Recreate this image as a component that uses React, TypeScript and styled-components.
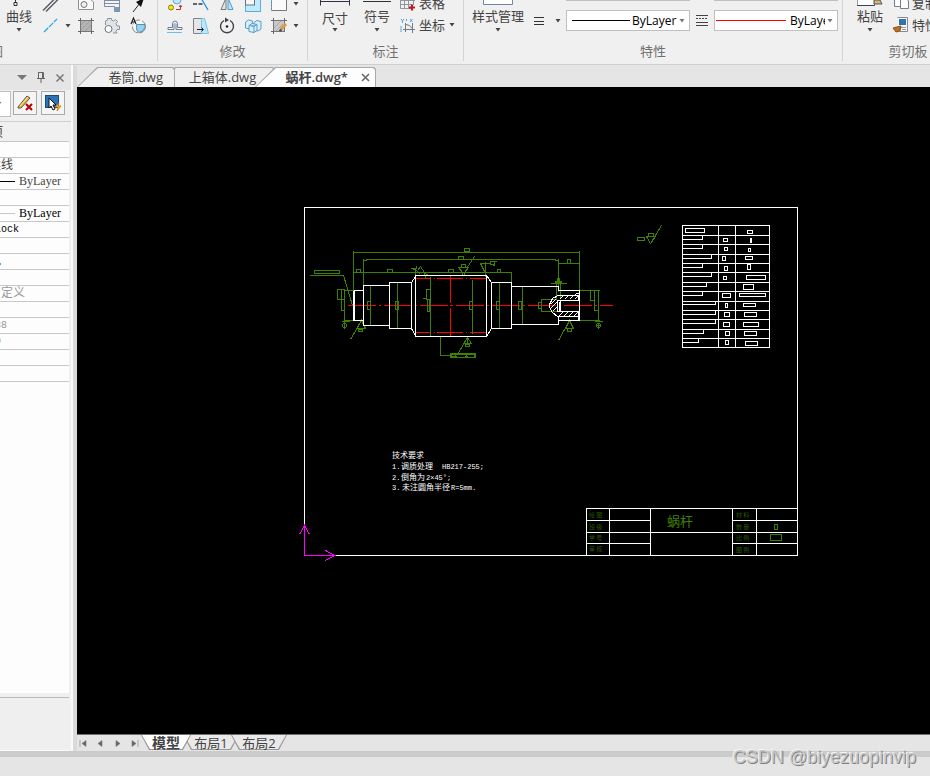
import React from "react";
import styled, { createGlobalStyle, css } from "styled-components";

const Global = createGlobalStyle`
  * { box-sizing: border-box; }
  html, body { margin: 0; padding: 0; }
  body {
    font-family: "Open Sans", "Noto Sans CJK SC", sans-serif;
    font-size: 13px;
    color: #444;
    background: #e5e5e5;
    overflow: hidden;
  }
  button, select, input { font: inherit; color: inherit; }
`;

/* ---------- shell ---------- */

const Shell = styled.div`
  position: relative;
  display: flex;
  flex-direction: column;
  height: 100vh;
  overflow: hidden;
`;

const Ribbon = styled.header`
  display: flex;
  flex: none;
  height: 65px;
  margin-left: -177px;
  background: #f0f0f0;
  border-bottom: 1px solid #cfcfcf;
`;

const Group = styled.section<{ $width: number; $pad?: number; $end?: boolean; $grow?: boolean }>`
  display: flex;
  flex-direction: column;
  flex: ${(p) => (p.$grow ? "1 0" : "0 0")} ${(p) => p.$width}px;
  height: 61px;
  border-right: ${(p) => (p.$grow ? "none" : "1px solid #d4d4d4")};
  > div {
    padding: 0 ${(p) => p.$pad ?? 4}px;
    justify-content: ${(p) => (p.$end ? "flex-end" : "flex-start")};
  }
`;

const Tools = styled.div`
  display: flex;
  align-items: flex-end;
  height: 37px;
  overflow: hidden;
  white-space: nowrap;
`;

const GroupTitle = styled.h2`
  margin: 0;
  padding-top: 4px;
  font-size: 13px;
  font-weight: 400;
  line-height: 20px;
  text-align: center;
  color: #707070;
`;

const ClipTitle = styled(GroupTitle)`
  width: 130px;
`;

const BigButton = styled.button<{ $width: number }>`
  display: flex;
  flex-direction: column;
  align-items: center;
  justify-content: flex-end;
  flex: none;
  width: ${(p) => p.$width}px;
  height: 37px;
  padding: 0 0 3px;
  border: 0;
  background: none;
  line-height: 17px;
  > svg { flex: none; }
`;

const ArrowSlot = styled.span`
  display: flex;
  align-items: flex-end;
  height: 10px;
  padding-bottom: 2px;
`;

const IconGrid = styled.div<{ $cols: number }>`
  display: grid;
  flex: none;
  grid-template-columns: repeat(${(p) => p.$cols}, 26px);
  grid-auto-rows: 22px;
`;

const Stack = styled.div<{ $width?: number }>`
  display: flex;
  flex-direction: column;
  flex: none;
  width: ${(p) => (p.$width ? p.$width + "px" : "auto")};
`;

const IconButton = styled.button`
  display: flex;
  align-items: center;
  justify-content: center;
  height: 22px;
  padding: 0;
  border: 0;
  background: none;
`;

const LabelButton = styled(IconButton)`
  justify-content: flex-start;
  gap: 1px;
  padding-bottom: 2px;
  line-height: 20px;
`;

const Arrow = ({ color = "#444" }: { color?: string }) => (
  <svg width="6" height="4" viewBox="0 0 6 4" aria-hidden="true">
    <path d="M.5 0H5.500L3 3.500Z" fill={color} />
  </svg>
);

const Combo = styled.label`
  display: flex;
  flex: none;
  align-items: center;
  gap: 2px;
  width: 124px;
  height: 21px;
  padding: 0 4px 0 1px;
  border: 1px solid #c0c0c0;
  background: #fff;
  > svg { flex: none; }
  select {
    flex: 1;
    min-width: 0;
    padding: 0;
    border: 0;
    appearance: none;
    background: none;
    color: #000;
    font-size: 12px;
    line-height: 18px;
    text-overflow: clip;
  }
`;

const ComboColumn = styled.div`
  display: flex;
  flex-direction: column;
  gap: 9px;
  height: 46px;
  margin-bottom: 6px;
  justify-content: flex-end;
`;

const SmallIcons = styled.div<{ $width: number }>`
  display: flex;
  flex: none;
  align-items: center;
  justify-content: space-around;
  width: ${(p) => p.$width}px;
  height: 21px;
  margin-bottom: 6px;
`;

/* ---------- ribbon icons ---------- */

const Ic = ({ children }: { children: React.ReactNode }) => (
  <svg width="20" height="20" viewBox="0 0 20 20" fill="none" aria-hidden="true">
    {children}
  </svg>
);

const icons: Record<string, React.ReactNode> = {
  dline: <path d="M3 16.5L16 3.5M6 17.5L18 5.5" stroke="#555b63" strokeWidth="1.4" />,
  line: (
    <>
      <path d="M4 16L17 3" stroke="#16a9e8" strokeWidth="1.2" strokeDasharray="6 1" />
    </>
  ),
  region: (
    <>
      <path d="M2.500 4V15.500H17.500V8L13 4Z" fill="#fafafa" stroke="#8c9199" />
      <circle cx="8" cy="10.500" r="3" fill="#eee" stroke="#777" />
    </>
  ),
  table: (
    <>
      <path d="M2.500 3V12.500H12.500V17.500H17.500V3" fill="#f4f4f4" stroke="#7d8da5" />
      <path d="M3 6.500h14M3 9.500h14" stroke="#7d8da5" />
      <path d="M12 13h5v4h-5Z" fill="#7c99bd" />
    </>
  ),
  arrow: (
    <>
      <path d="M5 18L12 9" stroke="#222" />
      <path d="M8 8L16 4L13 13Z" fill="#111" />
    </>
  ),
  hatch: (
    <>
      <rect x="4.500" y="4.500" width="11" height="11" fill="#b4b4b4" stroke="#777" />
      <path d="M2 4.500h3M4.500 2v3M15 4.500h3M15.500 2v3M2 15.500h3M4.500 15v3M15 15.500h3M15.500 15v3" stroke="#666" />
      <path d="M5 9l4-4M5 14l9-9M9 15l6-6" stroke="#a0a0a0" />
    </>
  ),
  gear: (
    <>
      <path d="M3.500 9V5l2-1V2.500h4V4l2 1 2-1.500 2 2L14 7.500l1 2.500h2.500v3.500H15l-1 2 1 1.500h-4" fill="#e0e3e8" stroke="#8b919b" />
      <circle cx="6.500" cy="13" r="3.500" fill="#fff" stroke="#6b717b" />
    </>
  ),
  clock: (
    <>
      <circle cx="11" cy="10.500" r="6.500" fill="#f4f8fa" stroke="#888" strokeDasharray="9 2" />
      <path d="M8.500 8.500h8.500v3q-2 5-6 5q-3-1-2.500-8Z" fill="#8fd4f2" stroke="#5b8ca8" />
      <path d="M3 8L5.500 2L8 8M4 6h3" stroke="#222" strokeWidth="1.200" />
    </>
  ),
  move: (
    <>
      <circle cx="12" cy="6" r="4" fill="#bfe6fb" stroke="#62a8d8" />
      <circle cx="6" cy="13.500" r="2.500" fill="#ffe600" stroke="#8b7b1b" />
      <path d="M11 15.500h4.500V12M14 13L15.500 11l1.500 2" stroke="#a33" />
    </>
  ),
  trim: (
    <>
      <path d="M2 10h10" stroke="#335" strokeWidth="1.300" strokeDasharray="4 1.500" />
      <path d="M10 4l7 12" stroke="#2b8fdd" strokeWidth="1.300" />
    </>
  ),
  mirror: (
    <>
      <path d="M9 4v11.500H4Z" fill="#e6e6e6" stroke="#777" />
      <path d="M11 4v11.500h5Z" fill="#bfe6fb" stroke="#4b9ad0" />
    </>
  ),
  scale: (
    <>
      <rect x="2.500" y="2.500" width="15" height="15" fill="#bfe9fd" stroke="#5facd8" />
      <rect x="2.500" y="3" width="9" height="8" fill="#f7f7f7" stroke="#68727d" />
    </>
  ),
  stretch: (
    <>
      <path d="M2.500 2V16.500H17.500V2" fill="#fafafa" stroke="#777" />
      <path d="M2.500 3v13" stroke="#54a8db" strokeDasharray="2 1" />
    </>
  ),
  offset: (
    <>
      <path d="M3 13.500V11.500H7.500V8q0-3 2.500-3t2.500 3v3.500H17v2h-6V8.500q-1-2-2 0v5Z" fill="#f6f6f6" stroke="#68809a" />
      <path d="M2 16.500h15" stroke="#71bce6" />
    </>
  ),
  chamfer: (
    <>
      <path d="M2.500 2.500H11V17.500H2.500Z" fill="#e6e6e6" stroke="#7a8288" />
      <path d="M10.500 2.500h3l4 15h-7Z" fill="#b8e8ff" stroke="#7fc4e2" />
      <path d="M6 13.500h6M10.500 11.500l2 2-2 2" stroke="#222" />
    </>
  ),
  rotate: (
    <>
      <path d="M7 4.500A6.500 6.500 0 1 0 13 4.500" stroke="#3d4249" strokeWidth="1.400" />
      <path d="M8 1.500l4 2.500-4 2.500" fill="#3d4249" />
      <circle cx="10" cy="10.500" r="1.300" fill="#222" />
    </>
  ),
  array: (
    <g stroke="#5b9dc3" fill="#d4f0fd">
      <path d="M2.500 6l3-2 4 1v6l-3 2-4-1Z" />
      <path d="M11 6.500l3-2 4 1V13l-3 2-4-1Z" />
      <path d="M6 9.500l3-2 5 1v6l-3 2-5-1ZM6 9.500l5 1 3-2M11 10.500v6" />
    </g>
  ),
  edit: (
    <>
      <rect x="4.500" y="4.500" width="11" height="11" fill="#c8c8c8" stroke="#777" />
      <path d="M2 4.500h3M4.500 2v3M15 4.500h3M15.500 2v3M2 15.500h3M4.500 15v3" stroke="#666" />
      <path d="M5 12l7-7M7 15l7-7" stroke="#aaa" />
      <path d="M12 13l5-5" stroke="#dc9b3a" strokeWidth="3" />
      <path d="M10.500 15l2-1.500" stroke="#444" strokeWidth="2" />
    </>
  ),
  grid: (
    <>
      <path d="M2.500 3v12.500H14M2 7.500h15M2 11.500h12M6.500 3v12M10.500 3v12M15.500 3v9" stroke="#8e959f" />
      <path d="M11 14.500h6M14 11.500v6" stroke="#c5161d" strokeWidth="2" />
    </>
  ),
  coord: (
    <>
      <path d="M7.500 8v9M5 14.500h12M14.500 8v10M8 9.500q4 0 6 4" stroke="#737a83" />
      <path d="M3 4l1.500 2L6 4M4.500 6v2M12 4l2.500 3M14.500 4l-2.500 3M3 11v6M8.500 4v2" stroke="#55a7e5" />
    </>
  ),
  copy: (
    <>
      <path d="M3.500 0v13.500h7V0" fill="#fff" stroke="#777f89" />
      <path d="M9.500 4v11.500h8V8l-4-4Z" fill="#fff" stroke="#777f89" />
    </>
  ),
  match: (
    <>
      <path d="M6.500 2.500h10v14h-8" fill="#f8f8f8" stroke="#858b94" />
      <rect x="8" y="4" width="7" height="6" fill="#3275ad" />
      <path d="M10 12.500h5M11 14.500h4" stroke="#999" />
      <path d="M2 13l4-1 4-1-1 5-4 1Z" fill="#ba7026" stroke="#8b5020" />
    </>
  ),
};

const Tool = ({ name, label }: { name: string; label: string }) => (
  <IconButton aria-label={label}>
    <Ic>{icons[name]}</Ic>
  </IconButton>
);

/* ---------- properties panel ---------- */

const Work = styled.main`
  display: flex;
  flex: 1;
  min-height: 0;
`;

const Side = styled.aside`
  display: flex;
  flex: none;
  flex-direction: column;
  width: 96px;
  margin-left: -23px;
  border-right: 2px solid #fafafa;
  background: #f0f0f0;
`;

const SideHead = styled.div`
  display: flex;
  justify-content: flex-end;
  align-items: center;
  height: 25px;
  gap: 9px;
  padding-right: 6px;
  background: #e5e5e5;
`;

const PlainButton = styled.button`
  display: flex;
  padding: 0;
  border: 0;
  background: none;
`;

const SideTools = styled.div`
  display: flex;
  gap: 4px;
  height: 32px;
  padding-top: 1px;
  border-bottom: 1px solid #d0d0d0;
`;

const Filter = styled.button`
  display: flex;
  align-items: center;
  justify-content: flex-end;
  width: 34px;
  height: 26px;
  margin-right: -2px;
  padding: 0 8px 0 0;
  border: 1px solid #c0c0c0;
  background: #fff;
`;

const Square = styled.button`
  display: flex;
  align-items: center;
  justify-content: center;
  width: 24px;
  height: 24px;
  padding: 0;
  border: 1px solid #a9a9a9;
  background: #f5f5f5;
`;

const Sheet = styled.div`
  flex: 1;
  margin-right: 2px;
  border-bottom: 4px solid #efefef;
  background: #fdfdfd;
`;

const PropTable = styled.table`
  width: 100%;
  table-layout: fixed;
  border-collapse: separate;
  border-spacing: 0;
  font: 12px/15px "Liberation Serif", "Noto Sans CJK SC", serif;
  th, td {
    height: 16px;
    padding: 0;
    border-bottom: 1px solid #c8c8c8;
    text-align: left;
    white-space: nowrap;
    overflow: hidden;
  }
  th {
    height: 20px;
    font-size: 13px;
    font-weight: 400;
    line-height: 19px;
    background: #f0f0f0;
  }
`;

const Value = styled.span<{ $tone?: string }>`
  display: flex;
  align-items: center;
  gap: 4px;
  height: 15px;
  color: ${(p) => p.$tone ?? "#444"};
`;

const Mono = styled(Value)`
  font: 10px/15px "Liberation Mono", monospace;
`;

const Swatch = styled.i<{ $color: string }>`
  width: 38px;
  height: 1px;
  background: ${(p) => p.$color};
`;

const Help = styled.div`
  flex: none;
  height: 54px;
  margin-right: 2px;
  border-top: 1px solid #b9b9b9;
  border-bottom: 1px solid #fafafa;
  background: #efefef;
`;

const rows: React.ReactNode[] = [
  null,
  <Value>连续线</Value>,
  <Value><Swatch $color="#000" />ByLayer</Value>,
  null,
  <Value $tone="#000"><Swatch $color="#c8c8c8" />ByLayer</Value>,
  <Mono $tone="#000">ByBlock</Mono>,
  null,
  <Value $tone="#000">颜色</Value>,
  null,
  <Value $tone="#999">由自定义</Value>,
  null,
  <Mono $tone="#999">57.88</Mono>,
  <Mono $tone="#999">0.00</Mono>,
  null,
  null,
];

const Properties = () => (
  <Side>
    <SideHead>
      <PlainButton aria-label="菜单">
        <svg width="10" height="6"><path d="M0 0H10L5 5Z" fill="#777" /></svg>
      </PlainButton>
      <PlainButton aria-label="固定">
        <svg width="10" height="11" fill="none" stroke="#666"><path d="M2.500 .5h5v6M2.500 0v6M6.500 0v6M1 6.500h8M5 6v5" /></svg>
      </PlainButton>
      <PlainButton aria-label="关闭">
        <svg width="10" height="10" stroke="#777" strokeWidth="1.500"><path d="M1.500 1.500l7 7M8.500 1.500l-7 7" /></svg>
      </PlainButton>
    </SideHead>
    <SideTools>
      <Filter aria-label="对象类型"><Arrow color="#777" /></Filter>
      <Square aria-label="清除选择">
        <svg width="20" height="20" viewBox="0 0 20 20" fill="none">
          <path d="M3 14L12 3l3 2L6 15L3 15Z" fill="#f5b52c" stroke="#555" />
          <path d="M5 13l8-9" stroke="#fff0a5" />
          <path d="M11 11l6 6M17 11l-6 6" stroke="#b80000" strokeWidth="2" />
        </svg>
      </Square>
      <Square aria-label="快速选择">
        <svg width="20" height="20" viewBox="0 0 20 20">
          <rect x="2.500" y="2.500" width="13" height="12" fill="#2b73b8" stroke="#184a7b" />
          <path d="M6 5v10l2-2 2 4 2-1-2-4h3Z" fill="#fff" stroke="#111" />
          <path d="M16 10l-4 4h3l-1 4 4-5h-3Z" fill="#ffc229" stroke="#c76b00" strokeWidth=".7" />
        </svg>
      </Square>
    </SideTools>
    <Sheet>
      <PropTable>
        <thead><tr><th scope="col">选项</th></tr></thead>
        <tbody>
          {rows.map((r, i) => (
            <tr key={i}><td>{r}</td></tr>
          ))}
        </tbody>
      </PropTable>
    </Sheet>
    <Help />
  </Side>
);

/* ---------- document area ---------- */

const Doc = styled.section`
  display: flex;
  flex: 1;
  flex-direction: column;
  min-width: 0;
  border-left: 4px solid #dadada;
`;

const TabStrip = styled.nav`
  display: flex;
  align-items: flex-end;
  flex: none;
  height: 22px;
`;

const FileTab = styled.button<{ $active?: boolean; $width: number; $z: number }>`
  position: relative;
  z-index: ${(p) => p.$z};
  display: flex;
  align-items: center;
  justify-content: flex-end;
  gap: 13px;
  flex: none;
  width: ${(p) => p.$width}px;
  height: 20px;
  padding: 0 ${(p) => (p.$active ? 6 : 12)}px 0 0;
  border: 0;
  background: #a9a9a9;
  clip-path: polygon(20px 0, calc(100% - 2px) 0, 100% 2px, 100% 100%, 0 100%);
  line-height: 20px;
  font-size: 13px;
  font-weight: ${(p) => (p.$active ? 600 : 400)};
  & + & { margin-left: -20px; }
  &::before {
    content: "";
    position: absolute;
    inset: 1px 1px 0 1px;
    z-index: -1;
    background: ${(p) => (p.$active ? "#fdfdfd" : "#f0f0f0")};
    clip-path: polygon(20px 0, calc(100% - 2px) 0, 100% 2px, 100% 100%, 0 100%);
  }
`;

const Canvas = styled.div`
  flex: 1;
  min-height: 0;
  background: #000;
  overflow: hidden;
  svg { display: block; width: 100%; height: 100%; }
`;

const Foot = styled.nav`
  display: flex;
  flex: none;
  height: 17px;
  padding-left: 2px;
  border-top: 1px solid #707070;
`;

const Pager = styled.div`
  display: flex;
  align-items: center;
  gap: 8px;
  width: 62px;
`;

const trapezoid = css`
  clip-path: polygon(0 0, 100% 0, calc(100% - 8px) 100%, 8px 100%);
`;

const SheetTab = styled.button<{ $active?: boolean }>`
  position: relative;
  z-index: ${(p) => (p.$active ? 2 : 1)};
  width: ${(p) => (p.$active ? 50 : 56)}px;
  height: 15px;
  padding: 0;
  border: 0;
  background: #999;
  font-size: ${(p) => (p.$active ? 14 : 13)}px;
  font-weight: ${(p) => (p.$active ? 700 : 400)};
  line-height: 12px;
  ${trapezoid}
  & + & { margin-left: -8px; }
  &::before {
    content: "";
    position: absolute;
    inset: 0 1px 1px;
    z-index: -1;
    background: ${(p) => (p.$active ? "#fff" : "#e9e9e9")};
    ${trapezoid}
  }
`;

const Status = styled.footer`
  flex: none;
  height: 25px;
  border-top: 6px solid #cbcbcb;
  background: #e5e5e5;
`;

const Watermark = styled.div`
  position: absolute;
  right: 14px;
  bottom: 8px;
  z-index: 3;
  font: 18px/22px "Liberation Sans", sans-serif;
  color: #c8c8c8;
  text-shadow: 1px 1px 0 #808080, -1px -1px 0 #f4f4f4;
`;

const Note = styled.text`
  font: 8px "Noto Sans CJK SC", sans-serif;
  fill: #fff;
`;

const Code = styled.text`
  font: 7px "Liberation Mono", monospace;
  fill: #fff;
`;

const Caption = styled.text<{ $big?: boolean }>`
  font: ${(p) => (p.$big ? 13 : 6)}px "Noto Sans CJK SC", sans-serif;
  fill: ${(p) => (p.$big ? "#408000" : "#2c5800")};
`;

const tableLines = [235, 244, 254, 263, 272, 282, 291, 301, 310, 319, 329, 338];
const steps = [702, 702, 711, 702, 711, 706, 702, 715, 715, 715, 703, 698];
const cells: [number, number, number, number][] = [
  [685, 228, 19, 4], [747, 230, 5, 3],
  [723, 238, 4, 3], [750, 238, 1, 4],
  [724, 247, 3, 3], [748, 248, 2, 3],
  [722, 256, 3, 4], [745, 256, 7, 3],
  [724, 266, 3, 4], [747, 264, 3, 5],
  [723, 276, 3, 3], [746, 275, 19, 4],
  [743, 284, 10, 5],
  [722, 293, 8, 4], [739, 293, 26, 3],
  [725, 303, 2, 4], [743, 303, 12, 3],
  [724, 312, 5, 4], [744, 312, 12, 4],
  [723, 322, 6, 4], [743, 322, 15, 4],
  [725, 331, 4, 4], [744, 331, 12, 4],
  [725, 340, 3, 4], [745, 341, 12, 4],
];
const tags: [number, number, number, number][] = [
  [464, 248, 5, 3], [458, 256, 5, 3], [356, 269, 4, 3], [387, 269, 5, 3], [448, 269, 5, 3],
  [497, 269, 3, 3], [567, 259, 3, 4], [314, 270, 25, 3],
  [337, 289, 4, 10], [341, 289, 3, 10], [341, 299, 3, 11], [358, 329, 4, 2],
  [367, 301, 3, 8], [395, 301, 3, 8], [426, 289, 4, 10], [427, 299, 2, 12],
  [469, 301, 3, 8], [496, 301, 3, 8], [518, 301, 3, 8], [538, 302, 3, 6],
  [590, 290, 4, 10], [594, 290, 4, 20], [461, 264, 4, 3], [490, 261, 4, 3],
  [465, 344, 4, 2], [567, 328, 4, 3], [637, 237, 7, 3], [648, 233, 5, 3],
  [774, 524, 3, 5], [770, 534, 11, 6],
];

const Drawing = () => (
  <svg viewBox="77 87 853 647" preserveAspectRatio="xMinYMin meet" role="img" aria-label="蜗杆" shapeRendering="crispEdges" fill="none">
    <g stroke="#fff" transform="translate(.5 .5)">
      <rect x="304" y="207" width="493" height="348" />
      <rect x="682" y="225" width="87" height="122" />
      <path d="M718 225V347M735 225V347" />
      <path d={tableLines.map((y, i) => `M682 ${y}H769M682 ${y + (i === 7 ? 3 : 4)}H${steps[i]}V${y}`).join("")} />
      {cells.map(([x, y, w, h], i) => <rect key={i} x={x} y={y} width={w} height={h} />)}
      <path d="M586 555V508H797M609 508V555M650 508V555M732 508V555M756 508V555M586 520H650M586 532H650M586 543H650M732 520H797M732 532H797M732 543H797M650 532H732" />
    </g>

    <g stroke="#f00" transform="translate(.5 .5)">
      <path d="M347 305H612" strokeDasharray="28 3 2 3" />
      <path d="M415 278H430M433 278H434M436 278H462M465 278H466M469 278H486M415 332H430M433 332H434M436 332H462M465 332H466M469 332H486" />
      <path d="M450 275V302M450 304V305M450 307V336" />
    </g>

    <g stroke="#408000" transform="translate(.5 .5)">
      <path d="M353 250V290M353 252H579M579 250V290M363 258V285M363 260H366V259H555V260H558M558 258V286M353 272H511V283M558 263H579" />
      <path d="M309 275H343L352 305M344 290V324M343 290H353M343 320H353M341 321H349" />
      <path d="M350 339L361 320L365 328H356L361 320M370 285V325M397 282V328M395 282H398M395 328H398M430 276V336M422 298H426M472 279V333M499 282V328M522 286V324M519 286H526M519 324H526" />
      <path d="M541 299V311M540 299H556M540 311H556M579 290H599M579 320H599M598 293V320M594 321H602" />
      <path d="M474 256L466 268M458 267H468L464 272V275H462V272L458 267M480 263H490M480 263L485 273V261M485 273V276M491 264L495 265M493 261L496 261" />
      <path d="M410 268H416V265M415 267V276M411 268L416 270L420 274M417 270L420 266L424 272L425 279M424 273L429 275" />
      <path d="M467 337V343M463 343L467 337L471 343ZM467 337L457 354M569 320L565 328H573ZM569 320L558 340M440 336V355H450M646 236H655L650 243ZM650 243L661 225" />
      <path d="M550 283H566M556 283V298M560 283V298M558 286V291" />
      {tags.map(([x, y, w, h], i) => <rect key={i} x={x} y={y} width={w} height={h} />)}
      <circle cx="344" cy="325" r="2" />
      <circle cx="598" cy="325" r="2" />
      <path d="M344 323V328M598 322V328M596 325H600" />
      <path d="M450 353H475V357H450ZM451 354H474V356H451ZM455 353V357M466 353V357" />
    </g>
    <path d="M555 284v-3h2v-3h3v3h2v3z" fill="#408000" />
    <path d="M457 355h8v2h-8zM468 355h6v2h-6z" fill="#000" />

    <g stroke="#fff" transform="translate(.5 .5)">
      <path d="M353 290V320M354 290V320M353 290H363M353 320H363M389 285H363V325H389M411 282H389V328H411V282M411 282L415 276M411 328L415 335M415 275H486V336H415ZM486 275L491 282M486 336L491 328M491 282H511V328H491ZM511 286H558V290H579V320H558V324H511M558 315V320" />
      <path d="M579 295H557L552 298L549 304V307L552 312L557 316H579M557 299V311M579 300H557M579 311H557M559 301V311M578 294V300M578 311V320M574 295L576 293H579" />
      <path d="M550 308L556 302M550 304L555 299M552 311L556 307M554 298L557 295M559 299L563 295M564 299L568 295M569 299L573 295M574 299L578 295M558 316L562 312M563 316L567 312M568 316L572 312M573 316L577 312" />
      <path d="M557 300H579M557 311H579M560 300V311" />
    </g>

    <g stroke="#f0f" transform="translate(.5 .5)">
      <path d="M304 525V555H334M299 534L304 525L309 534M325 550L334 555L325 560" />
    </g>

    <Note x="392" y="458">技术要求</Note>
    <Code x="392" y="469">1.</Code><Note x="401" y="469">调质处理</Note><Code x="442" y="469">HB217-255;</Code>
    <Code x="392" y="480">2.</Code><Note x="401" y="480">倒角为</Note><Code x="426" y="480">2×45°;</Code>
    <Code x="392" y="490">3.</Code><Note x="402" y="490">未注圆角半径</Note><Code x="451" y="490">R=5mm.</Code>

    <Caption x="589" y="517">绘 图</Caption>
    <Caption x="589" y="529">班 级</Caption>
    <Caption x="589" y="540">学 号</Caption>
    <Caption x="589" y="551">审 核</Caption>
    <Caption x="736" y="517">材 料</Caption>
    <Caption x="736" y="529">数 量</Caption>
    <Caption x="736" y="540">比 例</Caption>
    <Caption x="736" y="552">图 例</Caption>
    <Caption $big x="667" y="526">蜗杆</Caption>
  </svg>
);

const pagerPaths: [string, string][] = [
  ["首页", "M1 1V8M7 1.500V7.500L3 4.500Z"],
  ["上一页", "M6 1.500V7.500L2 4.500Z"],
  ["下一页", "M3 1.500V7.500L7 4.500Z"],
  ["末页", "M8 1V8M2 1.500V7.500L6 4.500Z"],
];

export default function App() {
  return (
    <Shell>
      <Global />
      <Ribbon>
        <Group $width={335} $pad={6} $end>
          <Tools>
            <BigButton $width={36}>
              <svg width="26" height="8" fill="none"><path d="M9.500 0V2M8 2.500h3v3H8Z" stroke="#333" /></svg>
              曲线
              <ArrowSlot><Arrow /></ArrowSlot>
            </BigButton>
            <IconGrid $cols={1}>
              <Tool name="dline" label="多线" />
              <Tool name="line" label="直线" />
            </IconGrid>
            <Stack $width={10}>
              <IconButton aria-label="直线选项"><Arrow /></IconButton>
            </Stack>
            <IconGrid $cols={3}>
              <Tool name="region" label="面域" />
              <Tool name="table" label="孔轴" />
              <Tool name="arrow" label="箭头" />
              <Tool name="hatch" label="填充" />
              <Tool name="gear" label="齿轮" />
              <Tool name="clock" label="局部视图" />
            </IconGrid>
          </Tools>
          <GroupTitle>绘图</GroupTitle>
        </Group>

        <Group $width={150}>
          <Tools>
            <IconGrid $cols={5}>
              <Tool name="move" label="移动" />
              <Tool name="trim" label="修剪" />
              <Tool name="mirror" label="镜像" />
              <Tool name="scale" label="缩放" />
              <Tool name="stretch" label="拉伸" />
              <Tool name="offset" label="偏移" />
              <Tool name="chamfer" label="倒角" />
              <Tool name="rotate" label="旋转" />
              <Tool name="array" label="阵列" />
              <Tool name="edit" label="编辑" />
            </IconGrid>
            <Stack $width={8}>
              <IconButton aria-label="更多"><Arrow /></IconButton>
              <IconButton aria-label="更多编辑"><Arrow /></IconButton>
            </Stack>
          </Tools>
          <GroupTitle>修改</GroupTitle>
        </Group>

        <Group $width={156} $pad={6}>
          <Tools>
            <BigButton $width={42}>
              <svg width="32" height="10" fill="none"><path d="M1.500 0V5.500M30.500 0V5.500M2 1.500H30" stroke="#334" /></svg>
              尺寸
              <ArrowSlot><Arrow /></ArrowSlot>
            </BigButton>
            <BigButton $width={42}>
              <svg width="28" height="8" fill="none"><path d="M0 1.500H28" stroke="#333" /></svg>
              符号
              <ArrowSlot><Arrow /></ArrowSlot>
            </BigButton>
            <Stack>
              <LabelButton><Ic>{icons.grid}</Ic>表格</LabelButton>
              <LabelButton><Ic>{icons.coord}</Ic>坐标&nbsp;<Arrow /></LabelButton>
            </Stack>
          </Tools>
          <GroupTitle>标注</GroupTitle>
        </Group>

        <Group $width={379} $pad={3}>
          <Tools>
            <BigButton $width={62}>
              <svg width="30" height="8" fill="none"><path d="M.5 0V4.500H29.500V0" fill="#fff" stroke="#6d87a5" /></svg>
              样式管理
              <ArrowSlot><Arrow /></ArrowSlot>
            </BigButton>
            <SmallIcons $width={37}>
              <svg width="10" height="10" stroke="#333"><path d="M0 1.500H10M0 5.500H10M0 8.500H10" /></svg>
              <Arrow />
            </SmallIcons>
            <ComboColumn>
              <Combo as="div" aria-hidden="true" />
              <Combo>
                <svg width="62" height="1"><path d="M4 .5H62" stroke="#000" /></svg>
                <select aria-label="线宽"><option>ByLayer</option></select>
                <Arrow color="#777" />
              </Combo>
            </ComboColumn>
            <SmallIcons $width={24}>
              <svg width="12" height="11" stroke="#444"><path d="M0 .5H12M0 7.500H12M0 10.500H12" /><path d="M0 3.500H12" strokeDasharray="2 1" /></svg>
            </SmallIcons>
            <ComboColumn>
              <Combo as="div" aria-hidden="true" />
              <Combo>
                <svg width="72" height="1"><path d="M0 .5H70" stroke="#f00" /></svg>
                <select aria-label="线型"><option>ByLayer</option></select>
                <Arrow color="#777" />
              </Combo>
            </ComboColumn>
          </Tools>
          <GroupTitle>特性</GroupTitle>
        </Group>

        <Group $width={87} $pad={6} $grow>
          <Tools>
            <BigButton $width={42}>
              <svg width="26" height="8" fill="none"><path d="M0 0V5.500H17.500V0" fill="#fff" stroke="#39414f" /><path d="M17 0h6l2 4h-8Z" fill="#ccb878" stroke="#555" /></svg>
              粘贴
              <ArrowSlot><Arrow /></ArrowSlot>
            </BigButton>
            <Stack>
              <LabelButton><Ic>{icons.copy}</Ic>复制</LabelButton>
              <LabelButton><Ic>{icons.match}</Ic>特性</LabelButton>
            </Stack>
          </Tools>
          <ClipTitle>剪切板</ClipTitle>
        </Group>
      </Ribbon>

      <Work>
        <Properties />
        <Doc>
          <TabStrip>
            <FileTab $width={98} $z={2}>卷筒.dwg</FileTab>
            <FileTab $width={120} $z={1}>上箱体.dwg&nbsp;&nbsp;</FileTab>
            <FileTab $width={121} $z={3} $active>
              蜗杆.dwg*
              <svg width="9" height="9" stroke="#666" strokeWidth="1.500"><path d="M1 1l7 7M8 1l-7 7" /></svg>
            </FileTab>
          </TabStrip>
          <Canvas><Drawing /></Canvas>
          <Foot>
            <Pager>
              {pagerPaths.map(([label, d]) => (
                <PlainButton key={label} aria-label={label}>
                  <svg width="9" height="9" viewBox="0 0 9 9" fill="#666" stroke="#777"><path d={d} strokeWidth=".6" /></svg>
                </PlainButton>
              ))}
            </Pager>
            <SheetTab $active>模型</SheetTab>
            <SheetTab>布局1</SheetTab>
            <SheetTab>布局2</SheetTab>
          </Foot>
        </Doc>
      </Work>
      <Status />
      <Watermark>CSDN @biyezuopinvip</Watermark>
    </Shell>
  );
}
